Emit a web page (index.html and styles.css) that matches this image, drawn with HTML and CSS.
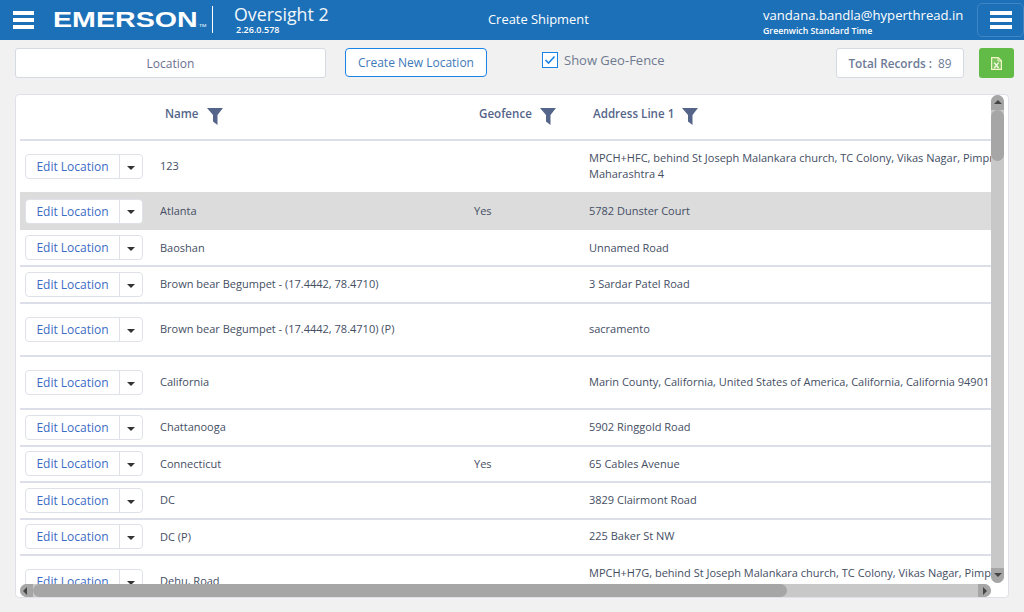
FILE: index.html
```html
<!DOCTYPE html>
<html lang="en">
<head>
<meta charset="utf-8">
<title>Oversight 2</title>
<link rel="stylesheet" href="styles.css">
</head>
<body>
<header class="topbar">
  <button class="burger burger-left" aria-label="Menu"><i></i><i></i><i></i></button>
  <div class="logo"><span class="logo-text">EMERSON<span class="tm">TM</span></span></div>
  <div class="product">
    <div class="product-name">Oversight 2</div>
    <div class="product-version">2.26.0.578</div>
  </div>
  <div class="page-title">Create Shipment</div>
  <div class="user">
    <div class="user-mail">vandana.bandla@hyperthread.in</div>
    <div class="user-tz">Greenwich Standard Time</div>
  </div>
  <button class="burger burger-right" aria-label="Menu"><i></i><i></i><i></i></button>
</header>

<section class="toolbar">
  <div class="location-box">Location</div>
  <button class="create-btn">Create New Location</button>
  <label class="geo">
    <span class="check"><svg width="12" height="10" viewBox="0 0 12 10"><path d="M1.5 5 L4.5 8 L10.5 1.5" fill="none" stroke="#1c83e6" stroke-width="1.6"/></svg></span>
    Show Geo-Fence
  </label>
  <div class="total"><b>Total Records :</b><span>89</span></div>
  <button class="excel" aria-label="Export">
    <svg width="11" height="13" viewBox="0 0 11 13"><path d="M.6 .6H7.2L10.4 3.8V12.4H.6Z" fill="#7cc55f" stroke="#f3f6c8" stroke-width="1.2"/><path d="M7 .6V4H10.4" fill="none" stroke="#f3f6c8"/><path d="M3.2 5.6L7.6 11M7.6 5.6L3.2 11" stroke="#f5f8e4" stroke-width="1.4"/></svg>
  </button>
</section>

<main class="panel">
  <div class="grid">
    <div class="row head">
      <div></div>
      <div class="th">Name <svg class="funnel" width="16" height="17" viewBox="0 0 16 17"><path d="M0 0H16L10.5 7V17L6 13.5V7Z" fill="#55658a"/></svg></div>
      <div class="th">Geofence <svg class="funnel" width="16" height="17" viewBox="0 0 16 17"><path d="M0 0H16L10.5 7V17L6 13.5V7Z" fill="#55658a"/></svg></div>
      <div class="th">Address Line 1 <svg class="funnel" width="16" height="17" viewBox="0 0 16 17"><path d="M0 0H16L10.5 7V17L6 13.5V7Z" fill="#55658a"/></svg></div>
    </div>

    <div class="row h51">
      <div class="act"><span class="edit">Edit Location</span><span class="caret"><i></i></span></div>
      <div>123</div><div></div>
      <div class="addr">MPCH+HFC, behind St Joseph Malankara church, TC Colony, Vikas Nagar, Pimpri-Chinchwad,<br>Maharashtra 4</div>
    </div>
    <div class="row h38 selected">
      <div class="act"><span class="edit">Edit Location</span><span class="caret"><i></i></span></div>
      <div>Atlanta</div><div>Yes</div><div class="addr">5782 Dunster Court</div>
    </div>
    <div class="row h37 tight">
      <div class="act"><span class="edit">Edit Location</span><span class="caret"><i></i></span></div>
      <div>Baoshan</div><div></div><div class="addr">Unnamed Road</div>
    </div>
    <div class="row h37">
      <div class="act"><span class="edit">Edit Location</span><span class="caret"><i></i></span></div>
      <div>Brown bear Begumpet - (17.4442, 78.4710)</div><div></div><div class="addr">3 Sardar Patel Road</div>
    </div>
    <div class="row h53">
      <div class="act"><span class="edit">Edit Location</span><span class="caret"><i></i></span></div>
      <div>Brown bear Begumpet - (17.4442, 78.4710) (P)</div><div></div><div class="addr">sacramento</div>
    </div>
    <div class="row h53">
      <div class="act"><span class="edit">Edit Location</span><span class="caret"><i></i></span></div>
      <div>California</div><div></div><div class="addr">Marin County, California, United States of America, California, California 94901</div>
    </div>
    <div class="row h37">
      <div class="act"><span class="edit">Edit Location</span><span class="caret"><i></i></span></div>
      <div>Chattanooga</div><div></div><div class="addr">5902 Ringgold Road</div>
    </div>
    <div class="row h36">
      <div class="act"><span class="edit">Edit Location</span><span class="caret"><i></i></span></div>
      <div>Connecticut</div><div>Yes</div><div class="addr">65 Cables Avenue</div>
    </div>
    <div class="row h37">
      <div class="act"><span class="edit">Edit Location</span><span class="caret"><i></i></span></div>
      <div>DC</div><div></div><div class="addr">3829 Clairmont Road</div>
    </div>
    <div class="row h36 fixed-addr">
      <div class="act"><span class="edit">Edit Location</span><span class="caret"><i></i></span></div>
      <div>DC (P)</div><div></div><div class="addr">225 Baker St NW</div>
    </div>
    <div class="row h53">
      <div class="act"><span class="edit">Edit Location</span><span class="caret"><i></i></span></div>
      <div>Dehu, Road</div><div></div>
      <div class="addr">MPCH+H7G, behind St Joseph Malankara church, TC Colony, Vikas Nagar, Pimpri-Chinchwad,<br>Maharashtra 4</div>
    </div>
  </div>

  <div class="sb-v">
    <span class="sb-btn sb-up"></span>
    <span class="sb-thumb-v"></span>
    <span class="sb-btn sb-down"></span>
  </div>
  <div class="sb-h">
    <span class="sb-btn-h sb-left"></span>
    <span class="sb-thumb-h"></span>
    <span class="sb-btn-h sb-right"></span>
  </div>
</main>
</body>
</html>
```
FILE: styles.css
```css
* { box-sizing: border-box; }
html, body { margin: 0; height: 100%; overflow: hidden; }
body {
  width: 1024px; height: 612px;
  background: #f1f1f1;
  font-family: "Open Sans", "Liberation Sans", sans-serif;
  font-size: 11px;
  color: #444e63;
}
button { font-family: inherit; padding: 0; cursor: pointer; }

/* top bar */
.topbar {
  height: 40px;
  background: #1c70b8;
  color: #fff;
  display: flex;
  align-items: center;
  position: relative;
}
.burger {
  display: flex; flex-direction: column; justify-content: center; gap: 3px;
  background: transparent; border: 0;
}
.burger i { display: block; height: 4px; width: 21px; background: #fff; }
.burger-left { margin-left: 13px; width: 21px; }
.logo {
  margin-left: 19px;
  width: 159px;
  height: 40px;
  line-height: 39px;
  font-family: "Liberation Sans", sans-serif;
  font-weight: 700;
  font-size: 22px;
}
.logo-text { display: inline-block; transform: scaleX(1.3); transform-origin: left center; }
.tm { font-size: 4px; font-weight: 400; margin-left: 1px; }
.product {
  border-left: 1px solid #fff;
  height: 27px;
  margin-top: -1px;
  padding-left: 21px;
  width: 200px;
}
.product-name { font-size: 17.8px; line-height: 20px; margin-top: -2px; color: #f2f7fb; }
.product-version { font-size: 9px; font-weight: 600; line-height: 11px; margin-left: 2px; }
.page-title {
  position: absolute; left: 488px; top: 10px;
  font-size: 12.9px; line-height: 18px;
}
.user { position: absolute; left: 763px; top: 6px; }
.user-mail { font-size: 13.1px; line-height: 18px; }
.user-tz { font-size: 8.75px; font-weight: 600; line-height: 12px; margin-top: 1px; }
.burger-right {
  position: absolute; left: 977px; top: 3px;
  width: 47px; height: 34px;
  border: 1px solid #3f86c4; border-radius: 5px;
  align-items: center;
}
.burger-right i { width: 22px; }

/* toolbar */
.toolbar { display: flex; align-items: flex-start; padding: 8px 10px 0 15px; height: 54px; }
.location-box {
  width: 311px; height: 30px;
  background: #fff; border: 1px solid #d5d9e2; border-radius: 3px;
  text-align: center; line-height: 29px; font-size: 12px; color: #6c6f92;
}
.create-btn {
  margin-left: 19px;
  width: 142px; height: 29px;
  background: #fff; border: 1px solid #1c83e6; border-radius: 4px;
  color: #3f78b8; font-size: 12px;
}
.geo {
  margin-left: 55px; margin-top: 4px;
  display: flex; align-items: center; gap: 6px;
  color: #6f7a90; font-size: 13px; line-height: 16px;
}
.check {
  width: 16px; height: 16px; border: 1px solid #1c83e6; background: #fff;
  display: flex; align-items: center; justify-content: center;
}
.total {
  margin-left: auto;
  width: 128px; height: 30px;
  background: #fff; border: 1px solid #d5d9e2; border-radius: 3px;
  display: flex; align-items: center; justify-content: center; gap: 6px;
  font-size: 11.8px; color: #6c7a96;
}
.total b { font-weight: 600; }
.excel {
  margin-left: 15px;
  width: 35px; height: 30px;
  background: #62bb46; border: 0; border-radius: 3px;
  display: flex; align-items: center; justify-content: center;
}

/* panel */
.panel {
  position: relative;
  margin-left: 15px;
  width: 994px; height: 504px;
  background: #fff;
  border: 1px solid #dee1e8;
  border-radius: 4px;
  padding-left: 4px;
  overflow: hidden;
}
.grid { width: 971px; overflow: hidden; }
.row {
  display: grid;
  grid-template-columns: 140px 314px 115px 1fr;
  align-items: center;
  border-bottom: 2px solid #dcdfe7;
  white-space: nowrap;
}
.row > div:not(.act) { padding-bottom: 2px; }
.row.tight > div:not(.act) { padding-bottom: 0; }
.row.head { height: 46px; }
.row > div.th {
  padding-left: 5px; padding-bottom: 8px;
  font-size: 11.6px; font-weight: 600; color: #55658a;
  display: flex; align-items: center; gap: 8px;
}
.row > div.th:nth-child(4) { padding-left: 4px; }
.funnel { margin-top: 6px; }
.h51 { height: 51px; border-bottom: 0; }
.h53 { height: 53px; }
.h38 { height: 38px; border-bottom: 0; }
.h36 { height: 36px; }
.h37 { height: 37px; }
.selected { background: #dcdcdc; }
.addr { white-space: nowrap; line-height: 16px; }
.h38 .addr, .h36 .addr { line-height: 17px; }
.fixed-addr .addr { line-height: 16px; }
.act {
  display: flex; margin-left: 5px; width: 118px; height: 25px;
  background: #fff; border: 1px solid #dee1e8; border-radius: 4px;
}
.h36 .act { margin-bottom: 1px; }
.edit {
  width: 94px; text-align: center; line-height: 23px;
  font-size: 12px; color: #3b6cc4;
  border-right: 1px solid #dee1e8;
}
.caret { flex: 1; display: flex; align-items: center; justify-content: center; }
.caret i {
  width: 0; height: 0; margin-top: 2px;
  border-left: 4px solid transparent; border-right: 4px solid transparent;
  border-top: 4px solid #333;
}

/* scrollbars */
.sb-v {
  position: absolute; right: 4px; top: 0; width: 13px; height: 488px;
  background: #c8c8c8; border-radius: 7px; overflow: hidden;
  display: flex; flex-direction: column;
}
.sb-btn { height: 15px; background: #a6a6a6; position: relative; flex: none; }
.sb-up::after, .sb-down::after {
  content: ""; position: absolute; left: 3px; top: 5px;
  border-left: 4px solid transparent; border-right: 4px solid transparent;
}
.sb-up::after { border-bottom: 4px solid #444; }
.sb-down::after { border-top: 4px solid #444; }
.sb-thumb-v { width: 13px; height: 51px; background: #a6a6a6; border-radius: 7px; flex: none; }
.sb-down { margin-top: auto; }
.sb-h {
  position: absolute; left: 4px; bottom: 0; width: 971px; height: 13px;
  background: #c8c8c8; border-radius: 7px; overflow: hidden;
  display: flex;
}
.sb-btn-h { width: 13px; background: #a6a6a6; position: relative; flex: none; }
.sb-left::after, .sb-right::after {
  content: ""; position: absolute; top: 3px; left: 3px;
  border-top: 4px solid transparent; border-bottom: 4px solid transparent;
}
.sb-left::after { border-right: 4px solid #444; }
.sb-right::after { border-left: 4px solid #444; left: 5px; }
.sb-thumb-h { width: 754px; background: #a6a6a6; border-radius: 7px; flex: none; }
.sb-right { margin-left: auto; }
```
